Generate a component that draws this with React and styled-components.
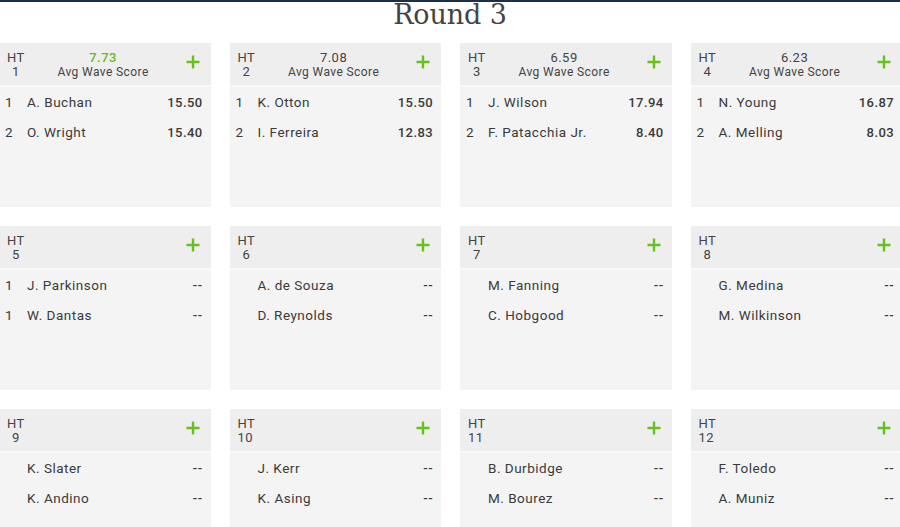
import styled, { createGlobalStyle } from "styled-components";

const GlobalStyle = createGlobalStyle`
  html, body {
    margin: 0;
    padding: 0;
    background: #ffffff;
  }
  body {
    font-family: Roboto, "Liberation Sans", sans-serif;
    color: #333333;
    overflow: hidden;
  }
`;

const heats = [
  {
    id: 1,
    avg: "7.73",
    leader: true,
    surfers: [
      { place: "1", name: "A. Buchan", score: "15.50" },
      { place: "2", name: "O. Wright", score: "15.40" },
    ],
  },
  {
    id: 2,
    avg: "7.08",
    surfers: [
      { place: "1", name: "K. Otton", score: "15.50" },
      { place: "2", name: "I. Ferreira", score: "12.83" },
    ],
  },
  {
    id: 3,
    avg: "6.59",
    surfers: [
      { place: "1", name: "J. Wilson", score: "17.94" },
      { place: "2", name: "F. Patacchia Jr.", score: "8.40" },
    ],
  },
  {
    id: 4,
    avg: "6.23",
    surfers: [
      { place: "1", name: "N. Young", score: "16.87" },
      { place: "2", name: "A. Melling", score: "8.03" },
    ],
  },
  {
    id: 5,
    surfers: [
      { place: "1", name: "J. Parkinson", score: "--" },
      { place: "1", name: "W. Dantas", score: "--" },
    ],
  },
  {
    id: 6,
    surfers: [
      { place: "", name: "A. de Souza", score: "--" },
      { place: "", name: "D. Reynolds", score: "--" },
    ],
  },
  {
    id: 7,
    surfers: [
      { place: "", name: "M. Fanning", score: "--" },
      { place: "", name: "C. Hobgood", score: "--" },
    ],
  },
  {
    id: 8,
    surfers: [
      { place: "", name: "G. Medina", score: "--" },
      { place: "", name: "M. Wilkinson", score: "--" },
    ],
  },
  {
    id: 9,
    surfers: [
      { place: "", name: "K. Slater", score: "--" },
      { place: "", name: "K. Andino", score: "--" },
    ],
  },
  {
    id: 10,
    surfers: [
      { place: "", name: "J. Kerr", score: "--" },
      { place: "", name: "K. Asing", score: "--" },
    ],
  },
  {
    id: 11,
    surfers: [
      { place: "", name: "B. Durbidge", score: "--" },
      { place: "", name: "M. Bourez", score: "--" },
    ],
  },
  {
    id: 12,
    surfers: [
      { place: "", name: "F. Toledo", score: "--" },
      { place: "", name: "A. Muniz", score: "--" },
    ],
  },
];

const Page = styled.div`
  border-top: 2px solid #1b2f4d;
  width: 900px;
  height: 525px;
  overflow: hidden;
`;

const TitleBar = styled.div`
  height: 41px;
  display: flex;
  justify-content: center;
`;

const Title = styled.h1`
  margin: 0;
  font-family: "DejaVu Serif", "Liberation Serif", serif;
  font-weight: 300;
  font-size: 27px;
  line-height: 26px;
  color: #444444;
  letter-spacing: -0.1px;
`;

const HeatGrid = styled.div`
  display: grid;
  grid-template-columns: repeat(4, 211.5px);
  grid-auto-rows: 164px;
  column-gap: 19px;
  row-gap: 19px;
  margin-left: -1px;
`;

const Card = styled.div`
  background: #f4f4f4;
  display: flex;
  flex-direction: column;
`;

const CardHeader = styled.div`
  height: 44px;
  flex: none;
  box-sizing: border-box;
  background: #eeeeee;
  border-bottom: 2px solid #f9f9f9;
  display: flex;
  align-items: flex-start;
  padding: 8px 11px 0 8px;
`;

const HeatLabel = styled.div`
  display: inline-flex;
  flex-direction: column;
  align-items: center;
  font-size: 13px;
  line-height: 14px;
  color: #444444;
  letter-spacing: 0.4px;
`;

const HeatNumber = styled.span`
  align-self: ${(props) => (props.wide ? "flex-start" : "center")};
`;

const AvgBlock = styled.div`
  flex: 1;
  text-align: center;
  padding-right: 4px;
`;

const AvgValue = styled.div`
  font-size: 13px;
  line-height: 14px;
  letter-spacing: 0.5px;
  color: ${(props) => (props.leader ? "#66bd1c" : "#444444")};
  font-weight: ${(props) => (props.leader ? 500 : 400)};
`;

const AvgCaption = styled.div`
  font-size: 12px;
  line-height: 14px;
  color: #444444;
  letter-spacing: 0.4px;
`;

const PlusButton = styled.div`
  width: 14px;
  height: 14px;
  margin-top: 4px;
  margin-left: auto;
  flex: none;
  display: flex;
`;

const SurferList = styled.div`
  display: flex;
  flex-direction: column;
`;

const SurferRow = styled.div`
  height: 30px;
  display: flex;
  align-items: center;
  padding: 0 8px 0 6px;
  font-size: 13.5px;
  color: #3a3a3a;
  letter-spacing: 0.5px;
`;

const Place = styled.span`
  width: 22px;
  flex: none;
`;

const Name = styled.span`
  flex: 1;
`;

const Score = styled.span`
  font-weight: 500;
  font-size: 13px;
  letter-spacing: 0.4px;
  text-align: right;
`;

const PlusIcon = () => (
  <svg width="14" height="14" viewBox="0 0 14 14">
    <path d="M7 0.5V13.5M0.5 7H13.5" stroke="#66c21a" strokeWidth="2.4" />
  </svg>
);

const HeatCard = ({ heat }) => (
  <Card>
    <CardHeader>
      <HeatLabel>
        <span>HT</span>
        <HeatNumber wide={heat.id > 9}>{heat.id}</HeatNumber>
      </HeatLabel>
      <AvgBlock>
        {heat.avg && (
          <>
            <AvgValue leader={heat.leader}>{heat.avg}</AvgValue>
            <AvgCaption>Avg Wave Score</AvgCaption>
          </>
        )}
      </AvgBlock>
      <PlusButton>
        <PlusIcon />
      </PlusButton>
    </CardHeader>
    <SurferList>
      {heat.surfers.map((s, i) => (
        <SurferRow key={i}>
          <Place>{s.place}</Place>
          <Name>{s.name}</Name>
          <Score>{s.score}</Score>
        </SurferRow>
      ))}
    </SurferList>
  </Card>
);

export default function App() {
  return (
    <Page>
      <GlobalStyle />
      <TitleBar>
        <Title>Round 3</Title>
      </TitleBar>
      <HeatGrid>
        {heats.map((heat) => (
          <HeatCard key={heat.id} heat={heat} />
        ))}
      </HeatGrid>
    </Page>
  );
}
